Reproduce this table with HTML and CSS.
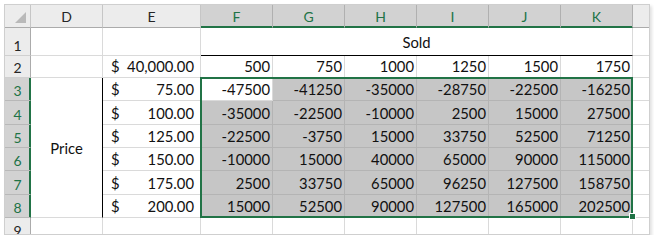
FILE: index.html
```html
<!DOCTYPE html>
<html>
<head>
<meta charset="utf-8">
<link rel="stylesheet" href="styles.css">
</head>
<body>
<div class="sheet">
  <div class="hd corner"><svg width="25" height="22" viewBox="0 0 25 22"><polygon points="21,7 21,18 10,18" fill="#b9b9b9"/></svg></div>
  <div class="hd col">D</div>
  <div class="hd col">E</div>
  <div class="hd col sel">F</div>
  <div class="hd col sel">G</div>
  <div class="hd col sel">H</div>
  <div class="hd col sel">I</div>
  <div class="hd col sel">J</div>
  <div class="hd col sel">K</div>
  <div class="hd col"></div>

  <div class="hd row">1</div>
  <div class="c"></div>
  <div class="c"></div>
  <div class="c sold">Sold</div>
  <div class="c"></div>

  <div class="hd row">2</div>
  <div class="c"></div>
  <div class="c acct"><span>$</span><span>40,000.00</span></div>
  <div class="c num">500</div>
  <div class="c num">750</div>
  <div class="c num">1000</div>
  <div class="c num">1250</div>
  <div class="c num">1500</div>
  <div class="c num">1750</div>
  <div class="c"></div>

  <div class="hd row sel">3</div>
  <div class="c price">Price</div>
  <div class="c acct"><span>$</span><span>75.00</span></div>
  <div class="c num active">-47500</div>
  <div class="c num hl">-41250</div>
  <div class="c num hl">-35000</div>
  <div class="c num hl">-28750</div>
  <div class="c num hl">-22500</div>
  <div class="c num hl">-16250</div>
  <div class="c"></div>

  <div class="hd row sel">4</div>
  <div class="c acct"><span>$</span><span>100.00</span></div>
  <div class="c num hl">-35000</div>
  <div class="c num hl">-22500</div>
  <div class="c num hl">-10000</div>
  <div class="c num hl">2500</div>
  <div class="c num hl">15000</div>
  <div class="c num hl">27500</div>
  <div class="c"></div>

  <div class="hd row sel">5</div>
  <div class="c acct"><span>$</span><span>125.00</span></div>
  <div class="c num hl">-22500</div>
  <div class="c num hl">-3750</div>
  <div class="c num hl">15000</div>
  <div class="c num hl">33750</div>
  <div class="c num hl">52500</div>
  <div class="c num hl">71250</div>
  <div class="c"></div>

  <div class="hd row sel">6</div>
  <div class="c acct"><span>$</span><span>150.00</span></div>
  <div class="c num hl">-10000</div>
  <div class="c num hl">15000</div>
  <div class="c num hl">40000</div>
  <div class="c num hl">65000</div>
  <div class="c num hl">90000</div>
  <div class="c num hl">115000</div>
  <div class="c"></div>

  <div class="hd row sel">7</div>
  <div class="c acct"><span>$</span><span>175.00</span></div>
  <div class="c num hl">2500</div>
  <div class="c num hl">33750</div>
  <div class="c num hl">65000</div>
  <div class="c num hl">96250</div>
  <div class="c num hl">127500</div>
  <div class="c num hl">158750</div>
  <div class="c"></div>

  <div class="hd row sel">8</div>
  <div class="c acct"><span>$</span><span>200.00</span></div>
  <div class="c num hl">15000</div>
  <div class="c num hl">52500</div>
  <div class="c num hl">90000</div>
  <div class="c num hl">127500</div>
  <div class="c num hl">165000</div>
  <div class="c num hl">202500</div>
  <div class="c"></div>

  <div class="hd row">9</div>
  <div class="c"></div>
  <div class="c"></div>
  <div class="c"></div>
  <div class="c"></div>
  <div class="c"></div>
  <div class="c"></div>
  <div class="c"></div>
  <div class="c"></div>
  <div class="c"></div>

  <div class="selection"><span class="handle"></span></div>
</div>
</body>
</html>
```
FILE: styles.css
```css
html, body {
  margin: 0;
  padding: 0;
  background: #fff;
}

.sheet {
  display: grid;
  grid-template-columns: 26px 72px 98px repeat(6, 72px) 72px;
  grid-template-rows: 23px 28px 22px 23px 24px 23px 23px 24px 23px 23px;
  width: 646px;
  height: 231px;
  box-sizing: border-box;
  margin: 4px 0 0 4px;
  border: 1px solid #cfcfcf;
  overflow: hidden;
  position: relative;
  background: #fff;
  box-shadow: 2px 2px 3px rgba(0, 0, 0, 0.12);
  font-family: Lato, "Liberation Sans", sans-serif;
  font-size: 14.8px;
  line-height: 18px;
  color: #111;
}

.c {
  display: flex;
  align-items: flex-end;
  box-sizing: border-box;
  min-width: 0;
  overflow: hidden;
  white-space: nowrap;
  padding: 0 2px 2px;
  border-right: 1px solid #dadada;
  border-bottom: 1px solid #dadada;
}

.num {
  justify-content: flex-end;
}

.acct {
  justify-content: space-between;
  padding: 0 6px 2px 8px;
}

.sold {
  grid-column: span 6;
  justify-content: center;
  align-items: center;
  padding: 0;
  border-bottom-color: #000;
}

.price {
  grid-row: span 6;
  justify-content: center;
  align-items: center;
  padding: 0;
  border-right-color: #000;
}

.hl {
  background: #c6c6c6;
  border-right-color: #b4b4b4;
  border-bottom-color: #b4b4b4;
}

.active {
  background: #fff;
}

.hd {
  display: flex;
  justify-content: center;
  align-items: flex-end;
  box-sizing: border-box;
  background: #ececec;
  border-right: 1px solid #c6c6c6;
  border-bottom: 1px solid #ababab;
  font-size: 14px;
  color: #262626;
}

.col {
  padding-bottom: 1px;
}

.col.sel {
  background: #d2d2d2;
  color: #217346;
  border-right-color: #b0b0b0;
  border-bottom-color: #217346;
  box-shadow: inset 0 -1px 0 #217346;
}

.row {
  padding-bottom: 0;
  border-right-color: #ababab;
  border-bottom-color: #d0d0d0;
}

.row.sel {
  background: #d2d2d2;
  color: #217346;
  border-right-color: #217346;
  border-bottom-color: #b8b8b8;
  box-shadow: inset -1px 0 0 #217346;
}

.corner {
  padding: 0;
  align-items: flex-start;
  justify-content: flex-start;
}

.corner svg {
  display: block;
}

.selection {
  position: absolute;
  grid-column: 4 / 10;
  grid-row: 4 / 10;
  top: -1px;
  left: -1px;
  right: 0;
  bottom: 0;
  border: 2px solid #217346;
  pointer-events: none;
}

.handle {
  position: absolute;
  right: -5px;
  bottom: -4px;
  width: 5px;
  height: 5px;
  background: #217346;
  border: 1px solid #fff;
}
```
